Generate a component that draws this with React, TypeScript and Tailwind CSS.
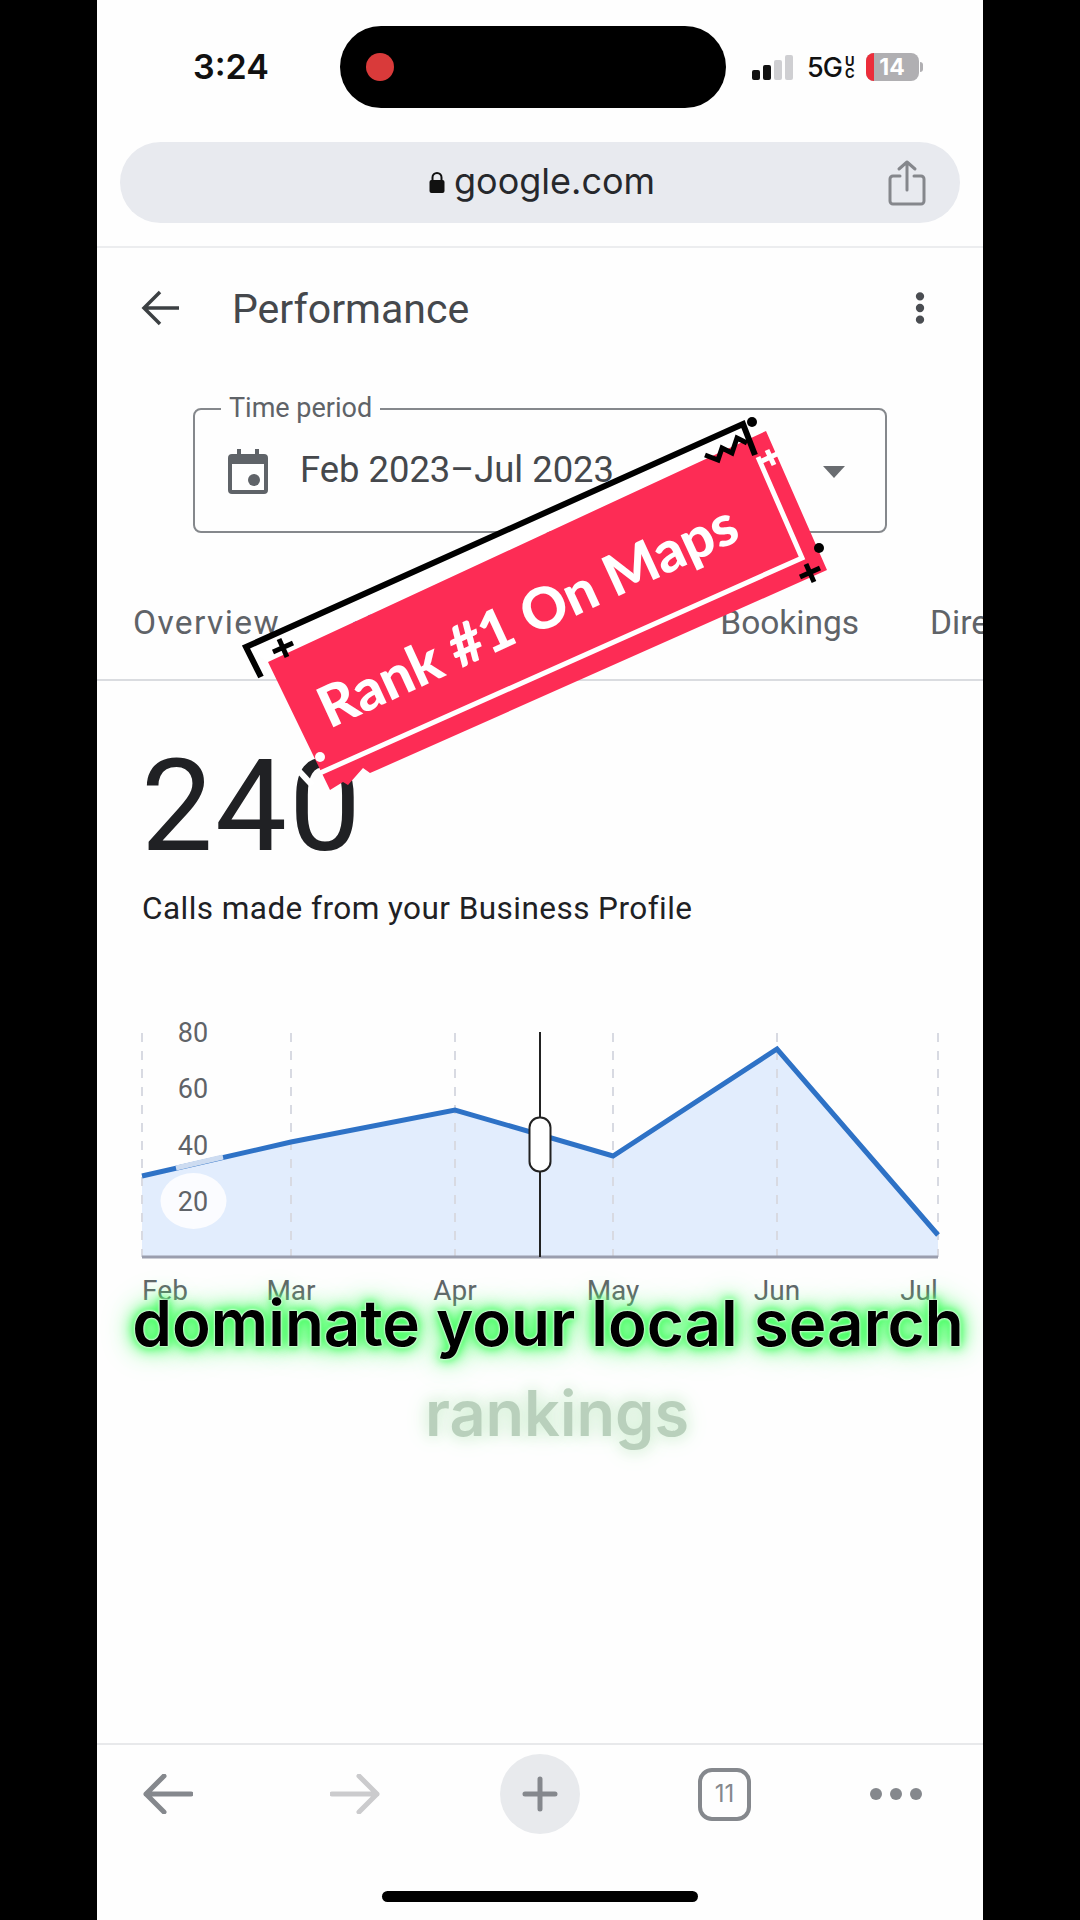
import { MoreVertical } from "lucide-react";

const months = [
  { label: "Feb", x: 165 },
  { label: "Mar", x: 291 },
  { label: "Apr", x: 455 },
  { label: "May", x: 613 },
  { label: "Jun", x: 777 },
  { label: "Jul", x: 919 },
];
const gridX = [142, 291, 455, 613, 777, 938];
const yLabels = [
  { label: "80", y: 1032 },
  { label: "60", y: 1088 },
  { label: "40", y: 1145 },
  { label: "20", y: 1201 },
];

function StatusBar() {
  return (
    <div className="flex h-[82px] mt-[26px] items-center pl-[96px] shrink-0">
      <div className="w-[147px] text-[34px] font-semibold leading-none text-[#111] font-['Inter',sans-serif]">3:24</div>
      <div className="flex h-[82px] w-[386px] items-center rounded-[41px] bg-black pl-[26px]">
        <div className="h-[28px] w-[28px] rounded-full bg-[#d93a3a]" />
      </div>
      <div className="ml-[26px] flex items-center font-['Inter',sans-serif]">
        <div className="flex h-[25px] items-end gap-[3px]">
          <div className="h-[10px] w-[8px] rounded-[2px] bg-[#111]" />
          <div className="h-[15px] w-[8px] rounded-[2px] bg-[#111]" />
          <div className="h-[20px] w-[8px] rounded-[2px] bg-[#cfcfd2]" />
          <div className="h-[25px] w-[8px] rounded-[2px] bg-[#cfcfd2]" />
        </div>
        <div className="ml-[14px] text-[27px] font-medium leading-none tracking-[-1px] text-[#111]">5G</div>
        <div className="ml-[3px] flex flex-col text-[13px] font-bold leading-[12px] text-[#111]">
          <span>U</span>
          <span>C</span>
        </div>
        <div className="relative ml-[11px] flex h-[28px] w-[53px] items-center justify-center overflow-hidden rounded-[8px] bg-[#b0afb2] text-[23px] font-bold leading-none text-white">
          <div className="absolute inset-y-0 left-0 w-[8px] bg-[#ec2d3a]" />
          <span className="relative">14</span>
        </div>
        <div className="ml-[1px] h-[10px] w-[3px] rounded-r-full bg-[#b0afb2]" />
      </div>
    </div>
  );
}

function UrlBar() {
  return (
    <div className="mx-[23px] mt-[34px] flex h-[81px] shrink-0 items-center rounded-[41px] bg-[#e8eaef] font-['Inter',sans-serif]">
      <svg width="16" height="23" viewBox="0 0 16 23" className="ml-[309px] mr-[9px]">
        <path d="M3.5 10V6.5a4.5 4.5 0 0 1 9 0V10" fill="none" stroke="#111" strokeWidth="2" />
        <rect x="0.5" y="9" width="15" height="13" rx="2" fill="#111" />
      </svg>
      <span className="mb-[4px] text-[36px] leading-none text-[#26282c]">google.com</span>
      <svg width="38" height="46" viewBox="0 0 38 46" className="ml-[233px]" fill="none" stroke="#85878c" strokeWidth="3" strokeLinecap="round" strokeLinejoin="round">
        <path d="M12 16H5a3 3 0 0 0-3 3v22a3 3 0 0 0 3 3h28a3 3 0 0 0 3-3V19a3 3 0 0 0-3-3h-7" />
        <path d="M19 30V2M11 9l8-7 8 7" />
      </svg>
    </div>
  );
}

function Header() {
  return (
    <div className="flex h-[120px] shrink-0 items-center text-[#45484c]">
      <svg width="38" height="36" viewBox="0 0 38 36" className="ml-[44px]" fill="none" stroke="#3c4043" strokeWidth="3.5">
        <path d="M38 18H3M19 2 3 18l16 16" />
      </svg>
      <div className="ml-[53px] mt-[3px] text-[41px] leading-none">Performance</div>
      <MoreVertical className="ml-auto mr-[43px]" size={40} fill="#4a4d52" stroke="#4a4d52" strokeWidth={3} />
    </div>
  );
}

function TimePeriod() {
  return (
    <div className="relative mx-[96px] mt-[40px] flex h-[125px] shrink-0 items-center rounded-[8px] border-2 border-[#85888c] pl-[33px]">
      <div className="absolute left-[26px] top-[-17px] bg-[#fefefe] px-[8px] text-[27px] leading-[30px] text-[#5f6368]">Time period</div>
      <svg width="40" height="45" viewBox="0 0 40 45" className="mt-[2px]">
        <path fill="#5f6368" d="M9 0h4v5h14V0h4v5h5a4 4 0 0 1 4 4v32a4 4 0 0 1-4 4H4a4 4 0 0 1-4-4V9a4 4 0 0 1 4-4h5z" />
        <rect x="4" y="15" width="32" height="26" fill="#fefefe" />
        <circle cx="26" cy="31" r="6" fill="#5f6368" />
      </svg>
      <div className="ml-[32px] text-[36.4px] leading-none text-[#45484c]">Feb 2023–Jul 2023</div>
      <div className="absolute right-[40px] top-[56px] h-0 w-0 border-x-[11px] border-t-[12px] border-x-transparent border-t-[#696c70]" />
    </div>
  );
}

function Tabs() {
  return (
    <div className="flex h-[148px] shrink-0 items-end gap-[71px] overflow-hidden border-b-2 border-[#dadce0] pl-[36px] text-[33.5px] leading-none text-[#5f6368]">
      <div className="shrink-0 pb-[40px] tracking-[1.4px]">Overview</div>
      <div className="shrink-0 pb-[40px] text-[#1a73e8]">Calls</div>
      <div className="shrink-0 pb-[40px]">Messages</div>
      <div className="shrink-0 pb-[40px]">Bookings</div>
      <div className="shrink-0 pb-[40px]">Directions</div>
    </div>
  );
}

function Chart() {
  return (
    <svg width="886" height="300" viewBox="97 1020 886 300" className="mt-[95px] block shrink-0">
      <polygon points="142,1176 291,1142 455,1110 613,1156 777,1049 938,1235 938,1257 142,1257" fill="#e2edfd" />
      {gridX.map((x) => (
        <line key={x} x1={x} x2={x} y1="1033" y2="1257" stroke="#d8dae2" strokeWidth="2" strokeDasharray="9 9" />
      ))}
      <polyline points="142,1176 291,1142 455,1110 613,1156 777,1049 938,1235" fill="none" stroke="#2e72c6" strokeWidth="5" strokeLinejoin="miter" />
      <line x1="176" x2="223" y1="1168" y2="1157" stroke="#cddcf1" strokeWidth="5" />
      <ellipse cx="193.5" cy="1201" rx="33" ry="28" fill="#fbfcff" />
      <line x1="142" x2="938" y1="1257" y2="1257" stroke="#9a9eae" strokeWidth="3" />
      <line x1="540" x2="540" y1="1032" y2="1257" stroke="#222" strokeWidth="2" />
      <rect x="529.5" y="1117.5" width="21" height="54" rx="10" fill="#fff" stroke="#222" strokeWidth="2" />
      {yLabels.map((l) => (
        <text key={l.label} x="193" y={l.y + 10} textAnchor="middle" fontSize="27" fill="#5f6368" fontFamily="Roboto, sans-serif">
          {l.label}
        </text>
      ))}
      {months.map((m) => (
        <text key={m.label} x={m.x} y="1300" textAnchor="middle" fontSize="28" fill="#5f6368" fontFamily="Roboto, sans-serif">
          {m.label}
        </text>
      ))}
    </svg>
  );
}

function Sticker() {
  return (
    <svg width="640" height="420" viewBox="220 400 640 420" className="absolute left-[123px] top-[400px]">
      <polygon points="246,647 743,424 766,431 268,662" fill="#fff" />
      <polygon points="766,431 827,570 377,770 370,773 363,768 348,785 343,782 330,790 268,662" fill="#fd2c55" />
      <polyline points="261,677 246,647 743,424 755,455" fill="none" stroke="#000" strokeWidth="6" />
      <polyline points="758,457 802,558 320,773" fill="none" stroke="#fff" strokeWidth="5" />
      <polyline points="705,455 718,460 722,448 732,453 737,438 747,443" fill="none" stroke="#000" strokeWidth="5" />
      <line x1="298" y1="770" x2="312" y2="785" stroke="#fff" strokeWidth="6" />
      <circle cx="752" cy="422" r="5" fill="#000" />
      <circle cx="819" cy="548" r="5" fill="#000" />
      <circle cx="320" cy="757" r="5" fill="#fff" />
      <path d="M273 652l20-9M279 639l8 18" stroke="#000" strokeWidth="5" />
      <path d="M800 577l20-9M806 564l8 18" stroke="#000" strokeWidth="5" />
      <path d="M762 461l17-8M767 450l7 15" stroke="#fff" strokeWidth="5" />
      <text x="0" y="0" transform="translate(536 634) rotate(-24.7)" textAnchor="middle" fontSize="57" fontWeight="900" fill="#fff" fontFamily="Lato, sans-serif">
        Rank #1 On Maps
      </text>
    </svg>
  );
}

function BottomBar() {
  return (
    <div className="mt-auto shrink-0 border-t-2 border-[#e8e9eb]">
      <div className="flex h-[98px] items-center">
        <svg width="50" height="40" viewBox="0 0 50 40" className="ml-[46px]" fill="none" stroke="#85888d" strokeWidth="5" strokeLinecap="round" strokeLinejoin="round">
          <path d="M48 20H3M21 2 3 20l18 18" />
        </svg>
        <svg width="50" height="40" viewBox="0 0 50 40" className="ml-[137px]" fill="none" stroke="#cbcbcd" strokeWidth="5" strokeLinecap="round" strokeLinejoin="round">
          <path d="M2 20h45M29 2l18 18-18 18" />
        </svg>
        <div className="ml-[120px] flex h-[80px] w-[80px] items-center justify-center rounded-full bg-[#e8eaed]">
          <svg width="36" height="36" viewBox="0 0 36 36" fill="none" stroke="#85888d" strokeWidth="5" strokeLinecap="round">
            <path d="M18 3v30M3 18h30" />
          </svg>
        </div>
        <div className="ml-[118px] flex h-[53px] w-[53px] items-center justify-center rounded-[14px] border-[4px] border-[#85888d] text-[24px] leading-none text-[#85888d] font-['Inter',sans-serif]">
          11
        </div>
        <div className="ml-[119px] flex w-[52px] justify-between">
          <div className="h-[12px] w-[12px] rounded-full bg-[#85888d]" />
          <div className="h-[12px] w-[12px] rounded-full bg-[#85888d]" />
          <div className="h-[12px] w-[12px] rounded-full bg-[#85888d]" />
        </div>
      </div>
      <div className="mx-auto mb-[18px] mt-[48px] h-[11px] w-[316px] rounded-full bg-black" />
    </div>
  );
}

export default function App() {
  return (
    <div className="flex h-[1920px] w-[1080px] justify-center bg-black font-['Roboto',sans-serif]">
      <div className="relative flex h-full w-[886px] flex-col overflow-hidden bg-[#fefefe]">
        <StatusBar />
        <UrlBar />
        <div className="mt-[23px] h-[2px] shrink-0 bg-[#ecedef]" />
        <Header />
        <TimePeriod />
        <Tabs />
        <div className="ml-[44px] mt-[60px] text-[128px] font-normal leading-[130px] tracking-[2px] text-[#202124]">240</div>
        <div className="ml-[45px] mt-[22px] text-[31.5px] leading-none tracking-[0.45px] text-[#202124]">Calls made from your Business Profile</div>
        <Chart />
        <BottomBar />
        <div className="absolute left-0 top-[1283px] flex w-full flex-col items-center font-['Inter',sans-serif] font-semibold">
          <div className="ml-[16px] whitespace-nowrap text-[63.7px] leading-[80px] text-black [text-shadow:0_0_2px_#fff,0_0_3px_#fff,0_0_8px_#3cff5a,0_0_14px_#3cff5a,0_0_22px_#3cff5a,0_0_34px_#8dff9d]">dominate your local search</div>
          <div className="ml-[34px] mt-[10px] text-[63px] leading-[80px] text-[#b9d0bc] [text-shadow:0_0_14px_#d4f0d6,0_0_24px_#d4f0d6]">rankings</div>
        </div>
        <Sticker />
      </div>
    </div>
  );
}
